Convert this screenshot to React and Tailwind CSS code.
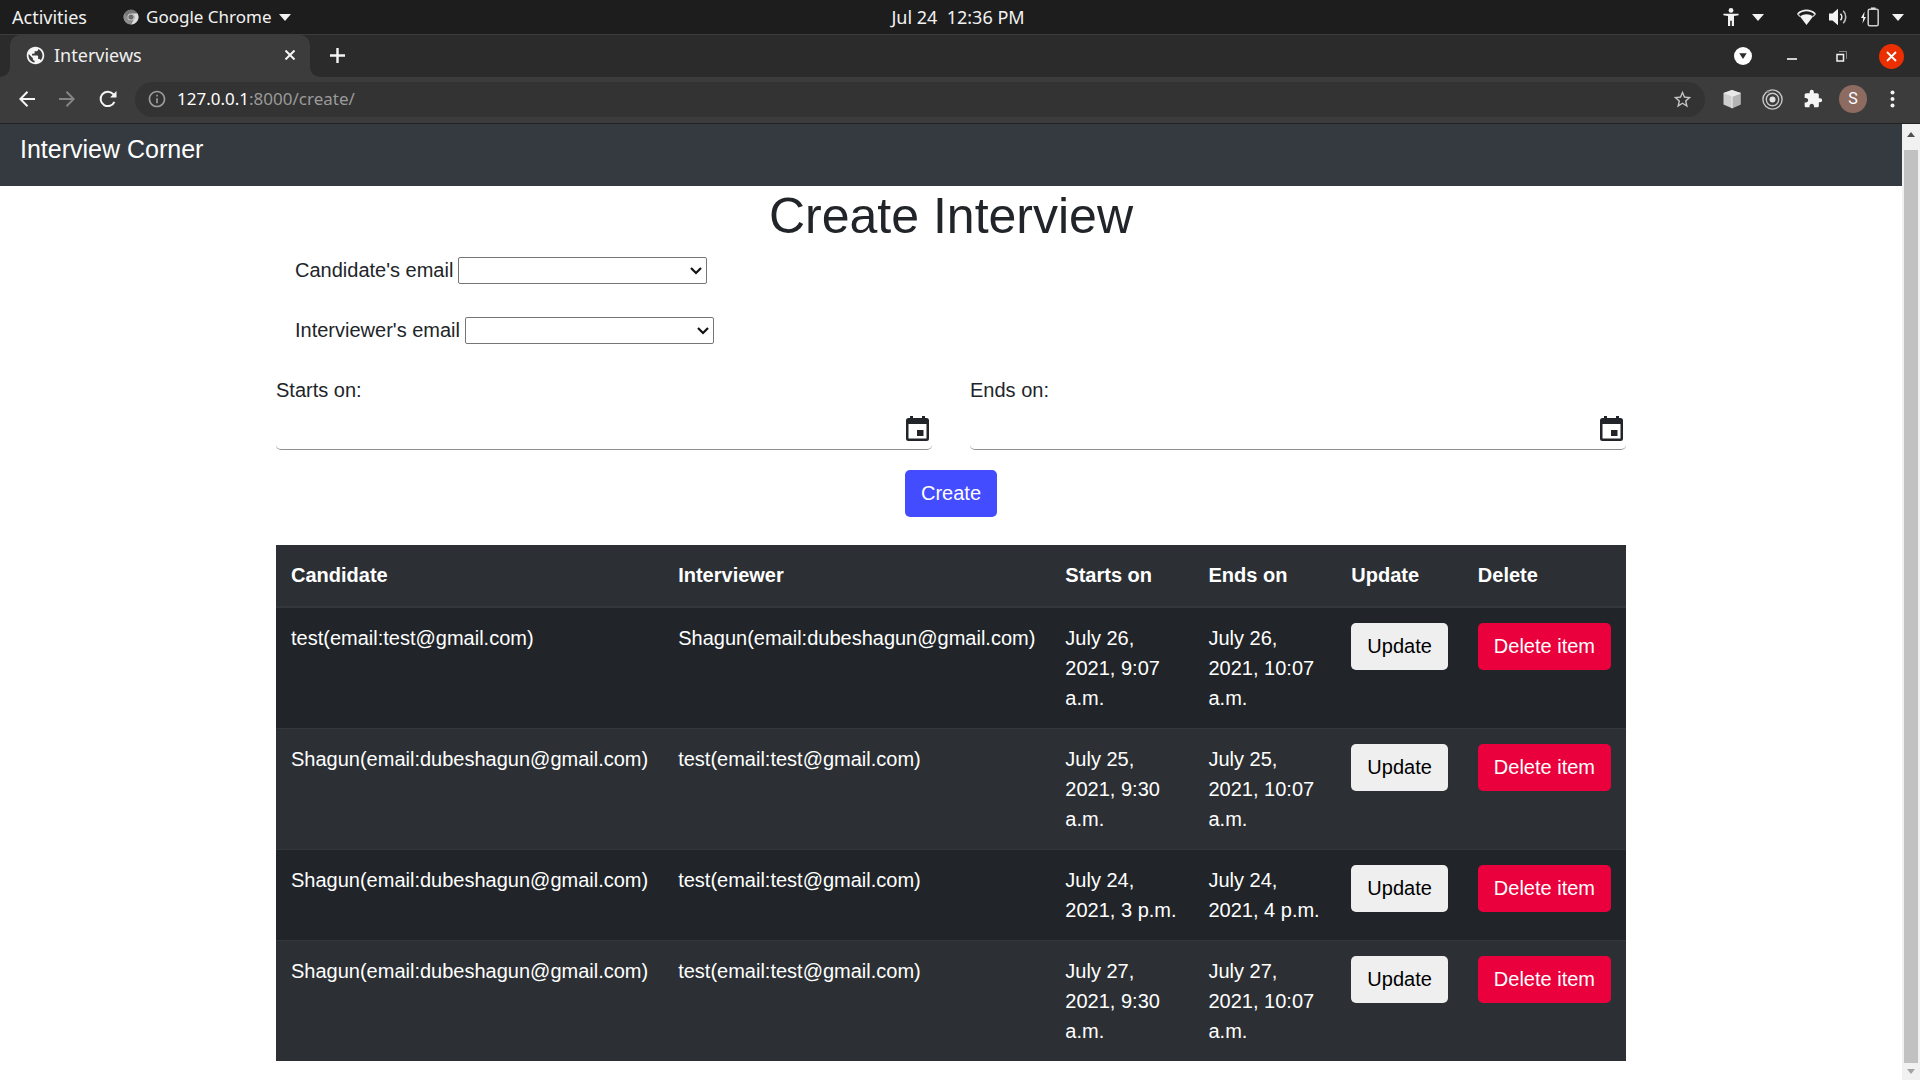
import React from "react";
import {
  MdPublic,
  MdOutlineInfo,
  MdStarBorder,
  MdExtension,
} from "react-icons/md";

const interviews = [
  {
    candidate: "test(email:test@gmail.com)",
    interviewer: "Shagun(email:dubeshagun@gmail.com)",
    starts: "July 26, 2021, 9:07 a.m.",
    ends: "July 26, 2021, 10:07 a.m.",
  },
  {
    candidate: "Shagun(email:dubeshagun@gmail.com)",
    interviewer: "test(email:test@gmail.com)",
    starts: "July 25, 2021, 9:30 a.m.",
    ends: "July 25, 2021, 10:07 a.m.",
  },
  {
    candidate: "Shagun(email:dubeshagun@gmail.com)",
    interviewer: "test(email:test@gmail.com)",
    starts: "July 24, 2021, 3 p.m.",
    ends: "July 24, 2021, 4 p.m.",
  },
  {
    candidate: "Shagun(email:dubeshagun@gmail.com)",
    interviewer: "test(email:test@gmail.com)",
    starts: "July 27, 2021, 9:30 a.m.",
    ends: "July 27, 2021, 10:07 a.m.",
  },
];

function Caret() {
  return (
    <svg width="12" height="7" viewBox="0 0 12 7" fill="#f2f2f2" aria-hidden="true">
      <path d="M0 0h12L6 7z" />
    </svg>
  );
}

function SystemBar() {
  return (
    <div className="grid h-[34px] grid-cols-[1fr_auto_1fr] items-center bg-[#1d1d1d] pr-4 pl-3 text-lg leading-6 text-[#f2f2f2]">
      <div className="flex items-center gap-9">
        <button type="button">Activities</button>
        <button type="button" className="flex items-center gap-[7px] text-[17px]">
          <svg width="16" height="16" viewBox="0 0 16 16" aria-hidden="true">
            <circle cx="8" cy="8" r="7.5" fill="#777" />
            <path d="M8 4.4h6.6A7.5 7.5 0 0 1 8 15.5l3.1-5.6A3.6 3.6 0 0 0 8 4.4z" fill="#dcdcdc" />
            <path d="M1.5 4.2l3.4 5.8A3.6 3.6 0 0 0 9 11.5L7.4 15.4A7.5 7.5 0 0 1 1.5 4.2z" fill="#8d8d8d" />
            <circle cx="8" cy="8" r="3.6" fill="#cfcfcf" />
            <circle cx="8" cy="8" r="2.6" fill="#6b6b6b" />
          </svg>
          Google Chrome
          <Caret />
        </button>
      </div>
      <time className="whitespace-pre">Jul 24  12:36 PM</time>
      <div className="flex items-center justify-end">
        <button type="button" aria-label="Accessibility" className="flex items-center gap-[13px]">
          <svg width="16" height="18" viewBox="0 0 16 18" fill="#f2f2f2" aria-hidden="true">
            <circle cx="8" cy="2.4" r="2.4" />
            <path d="M.4 5.800h15.200v1.400l-4.600.8V18H8.800v-5.200H7.200V18H5V8L.4 7.200z" />
          </svg>
          <Caret />
        </button>
        <button type="button" aria-label="System menu" className="ml-[33px] flex items-center gap-[13px]">
          <svg width="19" height="17" viewBox="0 0 19 17" aria-hidden="true">
            <path d="M.8 4.800C5.800 .2 13.200 .2 18.200 4.800" fill="none" stroke="#f2f2f2" strokeWidth="1.800" />
            <path d="M.4 4.600L3 7.500M18.600 4.600L16 7.500" stroke="#bdbdbd" strokeWidth="1.400" />
            <path d="M3 7.600c4-3.200 9-3.200 13 0L9.500 16z" fill="#f2f2f2" />
          </svg>
          <svg width="19" height="18" viewBox="0 0 19 18" aria-hidden="true">
            <path d="M0 5.500h3.500L9 .8v16.400l-5.500-4.700H0z" fill="#f2f2f2" />
            <path d="M11.500 5.800c1.700 1.800 1.700 4.600 0 6.400" fill="none" stroke="#f2f2f2" strokeWidth="1.600" />
            <path d="M14.200 2.800c3.400 3.500 3.400 8.900 0 12.400" fill="none" stroke="#bdbdbd" strokeWidth="1.600" />
          </svg>
          <svg width="18" height="20" viewBox="0 0 18 20" aria-hidden="true">
            <path d="M3.600 4.500L0 11h2.200L1.500 16.500 5 10H3z" fill="#f2f2f2" />
            <path d="M10 0.500h4.500v2H10z" fill="#f2f2f2" />
            <rect x="7.200" y="2.200" width="10" height="16.600" rx="1.500" fill="none" stroke="#cfcfcf" strokeWidth="1.500" />
          </svg>
          <Caret />
        </button>
      </div>
    </div>
  );
}

function TabStrip() {
  return (
    <div className="flex h-[43px] items-end justify-between border-t border-[#3c3c3c] bg-[#2b2b2b] pr-4">
      <div className="flex h-full items-end">
        <svg width="10" height="10" viewBox="0 0 10 10" fill="#3c3c3c" aria-hidden="true">
          <path d="M10 0v10H0A10 10 0 0 0 10 0z" />
        </svg>
        <div className="flex h-full w-[300px] items-center rounded-t-[10px] bg-[#3c3c3c] px-[15px] pb-0.5 text-[#f0f0f0]">
          <MdPublic size={21} color="#f5f5f5" aria-hidden="true" />
          <span className="ml-2 flex-1 text-lg leading-6">Interviews</span>
          <button type="button" aria-label="Close tab">
            <svg width="10" height="10" viewBox="0 0 10 10" stroke="#f5f5f5" strokeWidth="2" aria-hidden="true">
              <path d="M.5.5l9 9M9.500.5l-9 9" />
            </svg>
          </button>
        </div>
        <svg width="10" height="10" viewBox="0 0 10 10" fill="#3c3c3c" aria-hidden="true">
          <path d="M0 0v10h10A10 10 0 0 1 0 0z" />
        </svg>
        <button type="button" aria-label="New tab" className="ml-[10px] h-full pb-0.5">
          <svg width="15" height="15" viewBox="0 0 15 15" stroke="#f5f5f5" strokeWidth="2.400" aria-hidden="true">
            <path d="M7.500 0v15M0 7.500h15" />
          </svg>
        </button>
      </div>
      <div className="flex h-full items-center">
        <button type="button" aria-label="Search tabs">
          <svg width="18" height="18" viewBox="0 0 18 18" aria-hidden="true">
            <circle cx="9" cy="9" r="9" fill="#fff" />
            <path d="M5.300 6.300h7.400L9 12z" fill="#2b2b2b" />
          </svg>
        </button>
        <button type="button" aria-label="Minimize" className="ml-[35px]">
          <svg width="10" height="10" viewBox="0 0 10 10" aria-hidden="true">
            <path d="M0 7h10v2H0z" fill="#d0d0d0" />
          </svg>
        </button>
        <button type="button" aria-label="Restore" className="ml-[39px]">
          <svg width="11" height="11" viewBox="0 0 11 11" fill="none" aria-hidden="true">
            <path d="M3 .5h7.500V8" stroke="#8a8a8a" />
            <rect x="1" y="3.500" width="6.500" height="6.500" stroke="#f2f2f2" strokeWidth="1.500" />
          </svg>
        </button>
        <button type="button" aria-label="Close window" className="ml-8">
          <svg width="25" height="25" viewBox="0 0 25 25" aria-hidden="true">
            <circle cx="12.500" cy="12.500" r="12.500" fill="#eb2f00" />
            <path d="M8 8l9 9M17 8l-9 9" stroke="#fff" strokeWidth="1.800" />
          </svg>
        </button>
      </div>
    </div>
  );
}

function Toolbar() {
  return (
    <div className="flex h-[47px] items-center border-b border-[#222222] bg-[#3c3c3c] pr-[25px] pb-0.5 pl-[19px]">
      <button type="button" aria-label="Back">
        <svg width="16" height="16" viewBox="0 0 16 16" fill="none" stroke="#f5f5f5" strokeWidth="2" aria-hidden="true">
          <path d="M16 8H1.500M8.500 .8L1.300 8l7.200 7.200" />
        </svg>
      </button>
      <button type="button" aria-label="Forward" className="ml-6">
        <svg width="16" height="16" viewBox="0 0 16 16" fill="none" stroke="#858585" strokeWidth="2" aria-hidden="true">
          <path d="M0 8h14.500M7.500 .8L14.700 8l-7.200 7.200" />
        </svg>
      </button>
      <button type="button" aria-label="Reload" className="ml-6">
        <svg width="18" height="18" viewBox="0 0 18 18" fill="none" aria-hidden="true">
          <path d="M15.400 11.800A7.200 7.200 0 1 1 14 3.900L15.300 5.400" stroke="#f5f5f5" strokeWidth="2" />
          <path d="M17.500 1v6.500H11z" fill="#f5f5f5" />
        </svg>
      </button>
      <div className="ml-[18px] flex h-[35px] flex-1 items-center rounded-full bg-[#333333] px-3 text-[17px] leading-6">
        <MdOutlineInfo size={20} color="#9d9d9d" aria-hidden="true" />
        <a href="#address" className="ml-[10px] flex-1 text-[#9a9a9a]">
          <span className="text-white">127.0.0.1</span>:8000/create/
        </a>
        <button type="button" aria-label="Bookmark">
          <MdStarBorder size={21} color="#c4c4c4" />
        </button>
      </div>
      <button type="button" aria-label="Package extension" className="ml-[17px]">
        <svg width="20" height="20" viewBox="0 0 20 20" aria-hidden="true">
          <path d="M10 1l8.500 3v11.500l-8.500 3.700-8.500-3.700V4z" fill="#cdcdcd" />
          <path d="M10 1l8.500 3-8.500 3.500L1.500 4z" fill="#e8e8e8" />
          <path d="M10 7.500L18.500 4v11.500L10 19.200z" fill="#b4b4b4" />
          <path d="M10 7.500v11.700M10 7.500L18.500 4" stroke="#f0f0f0" />
        </svg>
      </button>
      <button type="button" aria-label="Target extension" className="ml-5">
        <svg width="21" height="21" viewBox="0 0 21 21" fill="none" stroke="#c8c8c8" strokeWidth="1.400" aria-hidden="true">
          <circle cx="10.500" cy="10.500" r="9.600" />
          <circle cx="10.500" cy="10.500" r="6.200" />
          <circle cx="10.500" cy="10.500" r="3" fill="#e0e0e0" stroke="none" />
          <circle cx="6" cy="2.500" r="1.500" fill="#8a8a8a" stroke="none" />
        </svg>
      </button>
      <button type="button" aria-label="Extensions" className="ml-5">
        <MdExtension size={20} color="#f5f5f5" />
      </button>
      <button
        type="button"
        aria-label="Profile"
        className="ml-4 flex size-7 items-center justify-center rounded-full bg-[#8d6b61] font-['Roboto',sans-serif] text-base leading-5 text-white"
      >
        S
      </button>
      <button type="button" aria-label="Menu" className="ml-[23px]">
        <svg width="5" height="18" viewBox="0 0 5 18" fill="#f5f5f5" aria-hidden="true">
          <circle cx="2.500" cy="2.500" r="2" />
          <circle cx="2.500" cy="9" r="2" />
          <circle cx="2.500" cy="15.500" r="2" />
        </svg>
      </button>
    </div>
  );
}

function EmailSelect({ id, label }) {
  return (
    <div className="flex h-[30px] items-center gap-[5px] px-[19px]">
      <label htmlFor={id}>{label}</label>
      <div className="relative flex">
        <select id={id} className="h-[27px] w-[249px] appearance-none rounded-[2px] border border-[#767676] bg-white">
          <option value=""></option>
        </select>
        <svg
          className="pointer-events-none absolute top-[10px] right-[5px]"
          width="12"
          height="8"
          viewBox="0 0 12 8"
          fill="none"
          stroke="#111"
          strokeWidth="2.200"
          aria-hidden="true"
        >
          <path d="M1 1l5 5 5-5" />
        </svg>
      </div>
    </div>
  );
}

function DateField({ id, label }) {
  return (
    <div className="flex-1">
      <label htmlFor={id} className="block">
        {label}
      </label>
      <div className="flex h-[45px] items-center rounded-[5px] border-b border-[#8f8f8f] pt-0.5 pr-[3px]">
        <input id={id} type="text" className="h-full min-w-0 flex-1 bg-transparent outline-none" />
        <button type="button" aria-label={"Choose date, " + label}>
          <svg width="23" height="25" viewBox="0 0 23 25" fill="#212529" aria-hidden="true">
            <path
              fillRule="evenodd"
              d="M4 0h3v2h9V0h3v2h1.500A2.500 2.500 0 0 1 23 4.500v18a2.500 2.500 0 0 1-2.500 2.500h-18A2.500 2.500 0 0 1 0 22.500v-18A2.500 2.500 0 0 1 2.500 2H4zM2.500 8v14.500h18V8z"
            />
            <path d="M11 14h6.500v6H11z" />
          </svg>
        </button>
      </div>
    </div>
  );
}

function InterviewTable() {
  return (
    <table className="mt-7 w-full border-separate border-spacing-0 bg-[#212529] text-left text-white">
      <thead className="bg-[#2c3034]">
        <tr>
          {["Candidate", "Interviewer", "Starts on", "Ends on", "Update", "Delete"].map((name) => (
            <th key={name} scope="col" className="border-b-2 border-b-[#32383e] px-[15px] pt-[15px] pb-4 font-bold">
              {name}
            </th>
          ))}
        </tr>
      </thead>
      <tbody className="[&>tr:nth-child(even)]:bg-[#2c3034] [&>tr:not(:first-child)>td]:border-t [&>tr>td]:border-[#32383e] [&>tr>td]:p-[15px] [&>tr>td]:align-top">
        {interviews.map((row) => (
          <tr key={row.starts}>
            <td>{row.candidate}</td>
            <td>{row.interviewer}</td>
            <td>{row.starts}</td>
            <td>{row.ends}</td>
            <td>
              <button type="button" className="block h-[47px] rounded-[5px] bg-[#efefef] px-4 pb-0.5 text-black">
                Update
              </button>
            </td>
            <td>
              <button type="button" className="block h-[47px] rounded-[5px] bg-[#ea003c] px-4 pb-0.5 whitespace-nowrap text-white">
                Delete item
              </button>
            </td>
          </tr>
        ))}
      </tbody>
    </table>
  );
}

function Scrollbar() {
  return (
    <div className="flex w-[18px] flex-col items-center bg-[#f1f1f1]" aria-hidden="true">
      <div className="flex h-[26px] items-center pb-[5px]">
        <svg width="8" height="5" viewBox="0 0 8 5" fill="#505050">
          <path d="M4 0l4 5H0z" />
        </svg>
      </div>
      <div className="w-[14px] flex-1 bg-[#c1c1c1]" />
      <div className="flex h-[17px] items-center">
        <svg width="8" height="5" viewBox="0 0 8 5" fill="#a3a3a3">
          <path d="M0 0h8L4 5z" />
        </svg>
      </div>
    </div>
  );
}

export default function App() {
  return (
    <div className="flex min-h-screen flex-col bg-white">
      <header className="font-['Noto_Sans',sans-serif]">
        <SystemBar />
        <TabStrip />
        <Toolbar />
      </header>
      <div className="flex flex-1 font-['Liberation_Sans',Arial,sans-serif] text-xl leading-[30px] text-[#212529]">
        <div className="min-w-0 flex-1">
          <nav className="h-[62px] bg-[#343a40] px-5 py-[6px]">
            <a href="#home" className="text-[25px] leading-[38px] text-white">
              Interview Corner
            </a>
          </nav>
          <main className="mx-auto w-full max-w-[1350px]">
            <h1 className="text-center text-[50px] leading-[60px]">Create Interview</h1>
            <form className="mt-[9px]">
              <div className="flex flex-col gap-[30px]">
                <EmailSelect id="candidate-email" label="Candidate's email" />
                <EmailSelect id="interviewer-email" label="Interviewer's email" />
                <div className="flex gap-[38px]">
                  <DateField id="starts-on" label="Starts on:" />
                  <DateField id="ends-on" label="Ends on:" />
                </div>
              </div>
              <button type="button" className="mx-auto mt-5 block h-[47px] rounded-[5px] bg-[#444cff] px-4 pb-0.5 text-white">
                Create
              </button>
            </form>
            <InterviewTable />
          </main>
        </div>
        <Scrollbar />
      </div>
    </div>
  );
}
